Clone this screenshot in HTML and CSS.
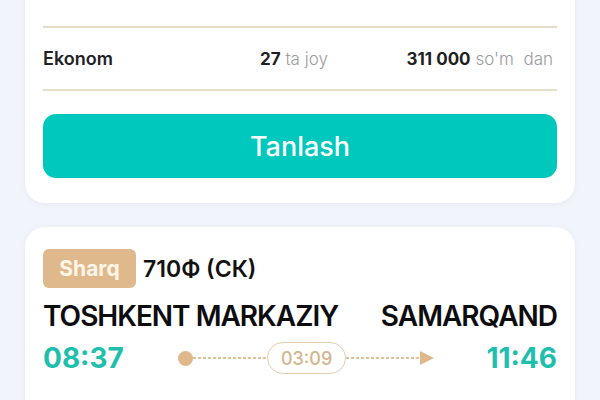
FILE: index.html
```html
<!DOCTYPE html>
<html lang="uz">
<head>
<meta charset="utf-8">
<title>Poyezdlar</title>
<link rel="stylesheet" href="styles.css">
</head>
<body>
<main class="page">
  <section class="card card-top">
    <div class="class-row class-row-prev"></div>
    <div class="class-row">
      <span class="class-name">Ekonom</span>
      <span class="seats"><b>27</b> ta joy</span>
      <span class="price"><b>311 000</b> so'm&nbsp; dan</span>
    </div>
    <button class="select-btn">Tanlash</button>
  </section>

  <section class="card card-train">
    <div class="train-head">
      <span class="badge">Sharq</span>
      <span class="train-no">710Ф (СК)</span>
    </div>
    <div class="route">
      <span>TOSHKENT MARKAZIY</span>
      <span>SAMARQAND</span>
    </div>
    <div class="times">
      <span class="time">08:37</span>
      <div class="timeline">
        <span class="dot"></span>
        <span class="dash"></span>
        <span class="duration">03:09</span>
        <span class="dash"></span>
        <svg class="arrow" width="14" height="14" viewBox="0 0 14 14"><path d="M0 0 L14 7 L0 14 Z" fill="#dfb98b"/></svg>
      </div>
      <span class="time">11:46</span>
    </div>
  </section>
</main>
</body>
</html>
```

FILE: styles.css
```css
* { box-sizing: border-box; }
html, body { margin: 0; padding: 0; }
body {
  background: #f2f4fb;
  font-family: Inter, "Noto Sans", sans-serif;
  color: #1c1c1e;
  overflow: hidden;
}
.page {
  padding: 0 25px;
  display: flex;
  flex-direction: column;
  gap: 24px;
}
.card {
  background: #ffffff;
  border-radius: 20px;
  box-shadow: 0 1px 6px rgba(30, 40, 80, 0.05);
  padding: 0 18px;
}
.card-top {
  margin-top: -30px;
  padding-bottom: 25px;
}
.class-row {
  display: grid;
  grid-template-columns: 217px 1fr auto;
  align-items: center;
  height: 63px;
  border-bottom: 2px solid #e4ddc7;
  font-size: 17px;
  padding-right: 4px;
}
.class-row-prev { height: 58px; }
.class-row b { font-weight: 700; color: #1f1f22; }
.class-name { font-size: 18px; font-weight: 600; color: #222226; }
.seats, .price { font-weight: 300; color: #9b9b9f; }
.select-btn {
  display: block;
  width: 100%;
  margin-top: 23px;
  height: 64px;
  border: none;
  border-radius: 13px;
  background: #00c8bc;
  color: #ffffff;
  font-family: Inter, "Noto Sans", sans-serif;
  font-size: 27px;
  font-weight: 500;
}
.card-train {
  padding-top: 22px;
  height: 220px;
}
.train-head {
  display: flex;
  align-items: center;
  gap: 7px;
}
.badge {
  display: inline-flex;
  align-items: center;
  justify-content: center;
  width: 93px;
  height: 39px;
  border-radius: 6px;
  background: #dfb98b;
  color: #fff6e8;
  font-size: 21px;
  font-weight: 700;
}
.train-no {
  font-size: 23px;
  font-weight: 600;
  color: #111;
}
.route {
  display: flex;
  justify-content: space-between;
  margin-top: 11px;
  font-size: 28px;
  line-height: 34px;
  font-weight: 600;
  letter-spacing: -1px;
  color: #0d0d0f;
}
.times {
  display: flex;
  align-items: center;
  margin-top: 8px;
  height: 34px;
}
.time {
  font-size: 28px;
  font-weight: 700;
  color: #1fbfad;
  line-height: 34px;
}
.timeline {
  flex: 1;
  margin: 0 52px 0 54px;
  display: flex;
  align-items: center;
}
.dot {
  width: 15px;
  height: 15px;
  border-radius: 50%;
  background: #dfb98b;
  flex: none;
}
.dash {
  flex: 1;
  height: 2px;
  background: repeating-linear-gradient(90deg, #dfc39c 0 3px, transparent 3px 5px);
}
.duration {
  flex: none;
  width: 79px;
  height: 32px;
  border: 1.5px solid #e3cfae;
  border-radius: 16px;
  display: flex;
  align-items: center;
  justify-content: center;
  font-size: 18px;
  font-weight: 500;
  color: #d3b68c;
}
.arrow { flex: none; display: block; }
```
